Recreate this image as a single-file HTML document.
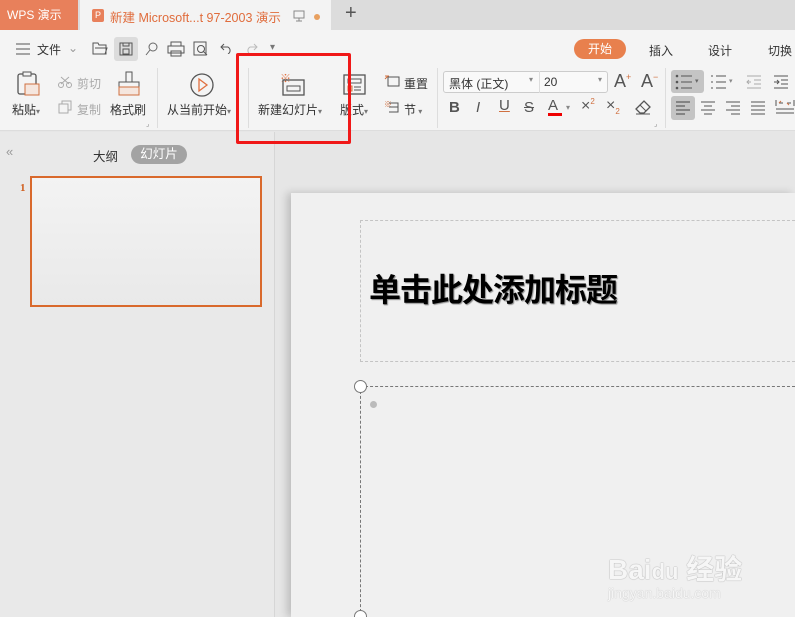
<!DOCTYPE html>
<html style="width:795px;height:617px;overflow:hidden"><head><meta charset="utf-8"><style>
*{margin:0;padding:0;box-sizing:border-box}
body{width:795px;height:617px;overflow:hidden;position:relative;background:#e6e6e6;font-family:"Liberation Sans","Noto Sans CJK SC",sans-serif;font-size:12px;color:#333}
.a{position:absolute;white-space:nowrap}
.ic{position:absolute}
</style></head><body>
<div class="a" style="left:0;top:0;width:795px;height:30px;background:#dcdcdc"></div>
<div class="a" style="left:0;top:0;width:78px;height:30px;background:#e8805b;color:#fff;font-size:12px;line-height:30px;padding-left:7px">WPS 演示</div>
<div class="a" style="left:80px;top:0;width:251px;height:30px;background:#f3f3f3"></div>
<div class="a" style="left:92px;top:9px;width:12px;height:13px;background:#e8805b;border-radius:2px;color:#fff;font-size:9px;line-height:13px;text-align:center">P</div>
<div class="a" style="left:110px;top:7px;color:#e06c3c;font-size:12.5px">新建 Microsoft...t 97-2003 演示</div>
<svg class="ic" style="left:293px;top:10px" width="12" height="12"><rect x="1" y="1" width="10" height="7" fill="none" stroke="#888"/><path d="M6 8v3M3 11h6" stroke="#888"/></svg>
<div class="a" style="left:314px;top:14px;width:6px;height:6px;border-radius:3px;background:#e8a060"></div>
<div class="a" style="left:345px;top:2px;font-size:20px;color:#555">+</div>
<div class="a" style="left:0;top:30px;width:795px;height:101px;background:#f4f4f4;border-bottom:1px solid #ddd"></div>
<svg class="ic" style="left:16px;top:43px" width="14" height="12"><path d="M0 1h14M0 6h14M0 11h14" stroke="#555"/></svg>
<div class="a" style="left:37px;top:41px;font-size:12px">文件</div>
<div class="a" style="left:68px;top:41px;color:#999">⌄</div>
<svg class="ic" style="left:92px;top:41px" width="16" height="14"><path d="M1 2h5l1 2h7v9H1z" fill="none" stroke="#555"/><path d="M3 7h12l-2 6" fill="none" stroke="#555"/></svg>
<div class="a" style="left:114px;top:37px;width:24px;height:24px;background:#dcdcdc;border-radius:3px"></div>
<svg class="ic" style="left:119px;top:42px" width="14" height="14"><rect x="1" y="1" width="12" height="12" fill="none" stroke="#555"/><rect x="4" y="7" width="6" height="5" fill="none" stroke="#555"/><path d="M4 1v3h6V1" fill="none" stroke="#555"/></svg>
<svg class="ic" style="left:144px;top:41px" width="14" height="16"><circle cx="9" cy="6" r="4" fill="none" stroke="#666"/><path d="M6 9l-4 5" stroke="#666"/></svg>
<svg class="ic" style="left:167px;top:41px" width="18" height="16"><rect x="4" y="1" width="10" height="4" fill="none" stroke="#555"/><rect x="1" y="5" width="16" height="7" fill="none" stroke="#555"/><rect x="4" y="10" width="10" height="5" fill="none" stroke="#555"/></svg>
<svg class="ic" style="left:193px;top:41px" width="16" height="16"><rect x="1" y="1" width="12" height="13" fill="none" stroke="#555"/><circle cx="8" cy="8" r="3.5" fill="none" stroke="#555"/><path d="M10 10l4 4" stroke="#555"/></svg>
<svg class="ic" style="left:220px;top:42px" width="14" height="12"><path d="M4 2L1 5l3 3M1 5h7a4 4 0 010 7" fill="none" stroke="#555"/></svg>
<svg class="ic" style="left:244px;top:42px" width="14" height="12"><path d="M10 2l3 3-3 3M13 5H6a4 4 0 000 7" fill="none" stroke="#bbb"/></svg>
<div class="a" style="left:270px;top:42px;color:#777;font-size:10px">▾</div>
<div class="a" style="left:574px;top:39px;width:52px;height:20px;border-radius:10px;background:#e8804d;color:#fff;text-align:center;line-height:20px">开始</div>
<div class="a" style="left:649px;top:42px">插入</div>
<div class="a" style="left:708px;top:42px">设计</div>
<div class="a" style="left:768px;top:42px">切换</div>
<svg class="ic" style="left:16px;top:71px" width="26" height="26"><rect x="2" y="3" width="18" height="20" rx="2" fill="none" stroke="#555" stroke-width="1.3"/><rect x="7" y="1" width="8" height="4" fill="#f4f4f4" stroke="#555"/><rect x="9" y="13" width="14" height="11" fill="#f5e6de" stroke="#d07040"/></svg>
<div class="a" style="left:12px;top:101px">粘贴<span style="font-size:8px;color:#777">▾</span></div>
<svg class="ic" style="left:58px;top:76px" width="14" height="12"><circle cx="3" cy="9" r="2.5" fill="none" stroke="#aaa"/><circle cx="11" cy="9" r="2.5" fill="none" stroke="#aaa"/><path d="M3 1l8 7M11 1L3 8" stroke="#aaa"/></svg>
<div class="a" style="left:77px;top:75px;color:#aaa">剪切</div>
<svg class="ic" style="left:58px;top:100px" width="14" height="14"><rect x="4" y="1" width="9" height="9" fill="none" stroke="#aaa"/><rect x="1" y="4" width="9" height="9" fill="#f4f4f4" stroke="#aaa"/></svg>
<div class="a" style="left:77px;top:101px;color:#aaa">复制</div>
<svg class="ic" style="left:117px;top:71px" width="24" height="26"><rect x="9" y="1" width="6" height="10" fill="none" stroke="#555"/><rect x="2" y="11" width="20" height="5" fill="none" stroke="#555"/><rect x="2" y="16" width="20" height="8" fill="#f5e6de" stroke="#d07040"/></svg>
<div class="a" style="left:110px;top:101px">格式刷</div>
<div class="a" style="left:146px;top:120px;color:#888;font-size:7px">⌟</div>
<div class="a" style="left:157px;top:68px;width:1px;height:60px;background:#ddd"></div>
<svg class="ic" style="left:189px;top:72px" width="26" height="26"><circle cx="13" cy="13" r="11" fill="none" stroke="#555" stroke-width="1.3"/><path d="M10 7l8 6-8 6z" fill="none" stroke="#e07040" stroke-width="1.3"/></svg>
<div class="a" style="left:167px;top:101px">从当前开始<span style="font-size:8px;color:#777">▾</span></div>
<div class="a" style="left:248px;top:68px;width:1px;height:60px;background:#ddd"></div>
<svg class="ic" style="left:280px;top:73px" width="26" height="24"><text x="0" y="9" font-size="11" fill="#e07040">※</text><rect x="3" y="7" width="21" height="15" fill="none" stroke="#555" stroke-width="1.3"/><rect x="7" y="13" width="13" height="5" fill="none" stroke="#555"/></svg>
<div class="a" style="left:258px;top:101px">新建幻灯片<span style="font-size:8px;color:#777">▾</span></div>
<svg class="ic" style="left:343px;top:74px" width="24" height="22"><rect x="1" y="1" width="21" height="19" fill="none" stroke="#555" stroke-width="1.3"/><rect x="5" y="5" width="13" height="4" fill="none" stroke="#555"/><rect x="5" y="12" width="4" height="5" fill="#f0c0a0" stroke="#d07040"/><path d="M11 13h7M11 16h7" stroke="#555"/></svg>
<div class="a" style="left:340px;top:101px">版式<span style="font-size:8px;color:#777">▾</span></div>
<svg class="ic" style="left:384px;top:74px" width="16" height="14"><rect x="4" y="3" width="11" height="9" fill="none" stroke="#555"/><path d="M1 5l3-3M1 2h4" stroke="#d07040"/></svg>
<div class="a" style="left:404px;top:75px">重置</div>
<svg class="ic" style="left:384px;top:100px" width="16" height="14"><text x="0" y="7" font-size="8" fill="#d07040">※</text><path d="M5 3h9v4H5M5 7h9v5H5" fill="none" stroke="#555"/></svg>
<div class="a" style="left:404px;top:101px">节<span style="font-size:8px;color:#777"> ▾</span></div>
<div class="a" style="left:437px;top:68px;width:1px;height:60px;background:#ddd"></div>
<div class="a" style="left:443px;top:71px;width:165px;height:22px;border:1px solid #ccc;border-radius:3px;background:#f9f9f9"></div>
<div class="a" style="left:539px;top:71px;width:1px;height:22px;background:#ddd"></div>
<div class="a" style="left:449px;top:75px">黑体 (正文)</div>
<div class="a" style="left:529px;top:75px;font-size:8px;color:#888">▾</div>
<div class="a" style="left:544px;top:75px">20</div>
<div class="a" style="left:598px;top:75px;font-size:8px;color:#888">▾</div>
<div class="a" style="left:614px;top:71px;font-size:18px;color:#555">A<sup style="font-size:9px;color:#d07040">+</sup></div>
<div class="a" style="left:641px;top:71px;font-size:18px;color:#555">A<sup style="font-size:9px;color:#d07040">−</sup></div>
<div class="a" style="left:449px;top:99px;font-size:15px;font-weight:bold;color:#555">B</div>
<div class="a" style="left:476px;top:99px;font-size:15px;font-style:italic;color:#555">I</div>
<div class="a" style="left:499px;top:97px;font-size:15px;color:#555;text-decoration:underline;text-decoration-color:#d07040">U</div>
<div class="a" style="left:524px;top:99px;font-size:15px;color:#555;text-decoration:line-through">S</div>
<div class="a" style="left:548px;top:97px;font-size:15px;color:#555">A</div>
<div class="a" style="left:548px;top:113px;width:14px;height:3px;background:#e00"></div>
<div class="a" style="left:566px;top:103px;font-size:8px;color:#888">▾</div>
<div class="a" style="left:581px;top:97px;font-size:16px;color:#555">×<sup style="font-size:8px;color:#d07040">2</sup></div>
<div class="a" style="left:606px;top:97px;font-size:16px;color:#555">×<sub style="font-size:8px;color:#d07040">2</sub></div>
<svg class="ic" style="left:634px;top:99px" width="18" height="16"><path d="M2 10l8-8 6 6-6 6H6z" fill="none" stroke="#555" stroke-width="1.3"/><path d="M6 6l6 6M2 15h14" stroke="#555"/></svg>
<div class="a" style="left:654px;top:120px;color:#888;font-size:7px">⌟</div>
<div class="a" style="left:665px;top:68px;width:1px;height:60px;background:#ddd"></div>
<div class="a" style="left:671px;top:70px;width:33px;height:23px;background:#c4c4c4;border-radius:3px"></div>
<svg class="ic" style="left:675px;top:74px" width="18" height="16"><g fill="#555"><circle cx="2" cy="2" r="1.3"/><circle cx="2" cy="8" r="1.3"/><circle cx="2" cy="14" r="1.3"/></g><path d="M6 2h11M6 8h11M6 14h11" stroke="#555"/></svg>
<div class="a" style="left:695px;top:77px;font-size:7px;color:#666">▾</div>
<svg class="ic" style="left:710px;top:74px" width="16" height="16"><path d="M6 2h10M6 8h10M6 14h10" stroke="#555"/><path d="M1 2h2M1 8h2M1 14h2" stroke="#555"/></svg>
<div class="a" style="left:729px;top:77px;font-size:7px;color:#888">▾</div>
<svg class="ic" style="left:746px;top:74px" width="16" height="16"><path d="M1 2h14M8 6h7M8 10h7M1 14h14M5 8H1m2-2L1 8l2 2" stroke="#aaa" fill="none"/></svg>
<svg class="ic" style="left:773px;top:74px" width="16" height="16"><path d="M1 2h14M8 6h7M8 10h7M1 14h14M1 8h5m-2-2l2 2-2 2" stroke="#555" fill="none"/></svg>
<div class="a" style="left:671px;top:96px;width:24px;height:24px;background:#c4c4c4;border-radius:3px"></div>
<svg class="ic" style="left:675px;top:100px" width="16" height="16"><path d="M1 2h14M1 6h9M1 10h14M1 14h9" stroke="#444"/></svg>
<svg class="ic" style="left:700px;top:100px" width="16" height="16"><path d="M1 2h14M4 6h8M1 10h14M4 14h8" stroke="#555"/></svg>
<svg class="ic" style="left:725px;top:100px" width="16" height="16"><path d="M1 2h14M6 6h9M1 10h14M6 14h9" stroke="#555"/></svg>
<svg class="ic" style="left:750px;top:100px" width="16" height="16"><path d="M1 2h14M1 6h14M1 10h14M1 14h14" stroke="#555"/></svg>
<svg class="ic" style="left:775px;top:99px" width="20" height="18"><path d="M1 1v6M19 1v6M1 10h18M1 14h18M4 4h4M12 4h4" stroke="#555"/><path d="M4 4l2-2M12 4l2 2" stroke="#d07040"/></svg>
<div class="a" style="left:0;top:132px;width:275px;height:485px;background:#e9e9e9;border-right:1px solid #d6d6d6"></div>
<div class="a" style="left:6px;top:144px;color:#999;font-size:13px">«</div>
<div class="a" style="left:93px;top:146px;font-size:12.5px">大纲</div>
<div class="a" style="left:131px;top:145px;width:56px;height:19px;border-radius:10px;background:#a3a3a3;color:#fff;text-align:center;line-height:19px;font-size:12.5px">幻灯片</div>
<div class="a" style="left:20px;top:182px;color:#d06020;font-weight:bold;font-family:'Liberation Serif',serif;font-size:11px">1</div>
<div class="a" style="left:30px;top:176px;width:232px;height:131px;border:2px solid #d9692c;background:linear-gradient(#f3f3f3,#e9e9e9)"></div>
<div class="a" style="left:291px;top:193px;width:504px;height:424px;background:#f0f0f0;box-shadow:-4px 0 8px rgba(0,0,0,.18)"></div>
<div class="a" style="left:360px;top:220px;width:435px;height:142px;border:1px dashed #c4c4c4;border-right:none"></div>
<div class="a" style="left:369px;top:265px;font-size:32px;font-weight:bold;color:#000;font-family:'Noto Sans CJK SC',sans-serif;letter-spacing:-1px;text-shadow:1px 1px 1px #888">单击此处添加标题</div>
<div class="a" style="left:360px;top:386px;width:435px;height:231px;border-top:1px dashed #777;border-left:1px dashed #777"></div>
<div class="a" style="left:354px;top:380px;width:13px;height:13px;border-radius:50%;background:#fff;border:1px solid #777"></div>
<div class="a" style="left:354px;top:610px;width:13px;height:13px;border-radius:50%;background:#fff;border:1px solid #777"></div>
<div class="a" style="left:370px;top:401px;width:7px;height:7px;border-radius:50%;background:#bbb"></div>
<div class="a" style="left:608px;top:548px;font-size:28px;font-weight:bold;color:#f6f6f6;text-shadow:0 0 1px #aaa,0 0 1px #aaa">Bai<span style="font-size:22px">du</span> 经验</div>
<div class="a" style="left:608px;top:585px;font-size:14px;color:#f6f6f6;text-shadow:0 0 1px #aaa">jingyan.baidu.com</div>
<div class="a" style="left:236px;top:53px;width:115px;height:91px;border:3px solid #f01818;border-radius:2px"></div>
</body></html>
